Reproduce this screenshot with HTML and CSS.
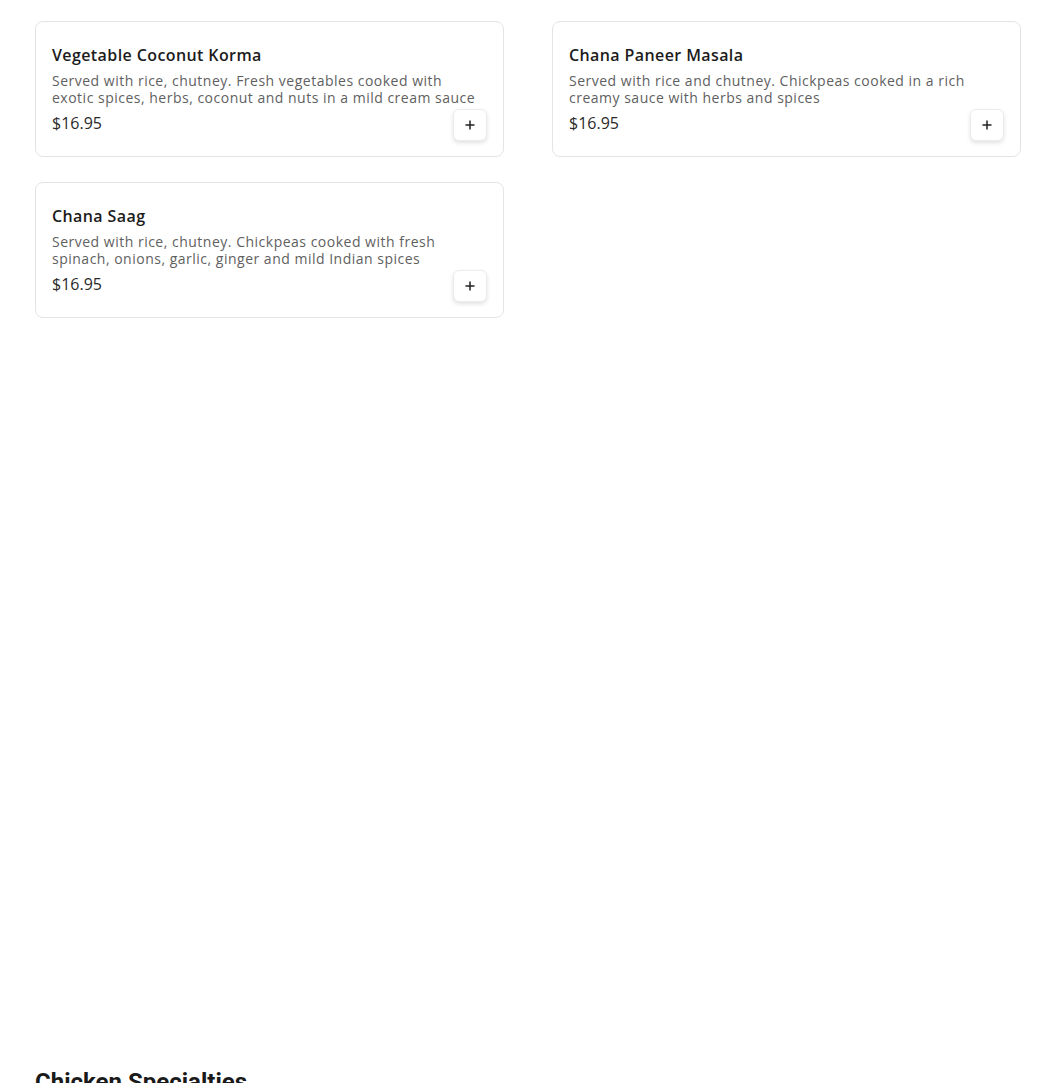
FILE: index.html
```html
<!DOCTYPE html>
<html lang="en">
<head>
    <meta charset="UTF-8">
    <meta name="viewport" content="width=device-width, initial-scale=1.0">
    <title>Menu</title>
    <link rel="stylesheet" href="styles.css">
</head>
<body>
<main class="menu">
    <section class="category">
        <div class="items">
            <div class="card">
                <h3 class="name">Vegetable Coconut Korma</h3>
                <p class="desc">Served with rice, chutney. Fresh vegetables cooked with exotic spices, herbs, coconut and nuts in a mild cream sauce</p>
                <div class="bottom">
                    <span class="price">$16.95</span>
                    <button class="add" aria-label="Add">
                        <svg width="12" height="12" viewBox="0 0 12 12"><path d="M6 1.5v9M1.5 6h9" stroke="#222" stroke-width="1.5" fill="none"/></svg>
                    </button>
                </div>
            </div>
            <div class="card">
                <h3 class="name">Chana Paneer Masala</h3>
                <p class="desc">Served with rice and chutney. Chickpeas cooked in a rich creamy sauce with herbs and spices</p>
                <div class="bottom">
                    <span class="price">$16.95</span>
                    <button class="add" aria-label="Add">
                        <svg width="12" height="12" viewBox="0 0 12 12"><path d="M6 1.5v9M1.5 6h9" stroke="#222" stroke-width="1.5" fill="none"/></svg>
                    </button>
                </div>
            </div>
            <div class="card">
                <h3 class="name">Chana Saag</h3>
                <p class="desc">Served with rice, chutney. Chickpeas cooked with fresh spinach, onions, garlic, ginger and mild Indian spices</p>
                <div class="bottom">
                    <span class="price">$16.95</span>
                    <button class="add" aria-label="Add">
                        <svg width="12" height="12" viewBox="0 0 12 12"><path d="M6 1.5v9M1.5 6h9" stroke="#222" stroke-width="1.5" fill="none"/></svg>
                    </button>
                </div>
            </div>
        </div>
    </section>
    <section class="category">
        <h2 class="title">Chicken Specialties</h2>
    </section>
</main>
</body>
</html>
```

FILE: styles.css
```css
body {
    margin: 0;
    background-color: #fff;
    font-family: 'Open Sans', 'DejaVu Sans', sans-serif;
    color: #1a1a1a;
}

.menu {
    padding: 21px 30px 0 35px;
}

.items {
    display: grid;
    grid-template-columns: 469px 469px;
    column-gap: 48px;
    row-gap: 25px;
}

.card {
    box-sizing: border-box;
    height: 136px;
    padding: 23px 16px 16px 16px;
    border: 1px solid #e4e4e4;
    border-radius: 8px;
    display: flex;
    flex-direction: column;
}

.name {
    margin: 0;
    font-size: 16px;
    font-weight: 600;
    line-height: 20px;
    letter-spacing: 0.4px;
    color: #1c1c1c;
}

.desc {
    margin: 7px 0 0 0;
    font-size: 14px;
    line-height: 17px;
    letter-spacing: 0.5px;
    color: #5f5f5f;
}

.bottom {
    display: flex;
    justify-content: space-between;
    align-items: flex-start;
    margin-top: 3px;
}

.price {
    padding-top: 4px;
    font-size: 16px;
    line-height: 20px;
    color: #2a2a2a;
}

.add {
    width: 34px;
    height: 32px;
    padding: 0;
    display: flex;
    align-items: center;
    justify-content: center;
    background: #fff;
    border: 1px solid #ececec;
    border-radius: 6px;
    box-shadow: 0 2px 4px rgba(0, 0, 0, 0.12);
    cursor: pointer;
}

.category + .category {
    margin-top: 750px;
}

.title {
    margin: 0;
    font-family: Roboto, 'Liberation Sans', sans-serif;
    font-size: 24px;
    font-weight: 700;
    color: #1a1a1a;
}
```
